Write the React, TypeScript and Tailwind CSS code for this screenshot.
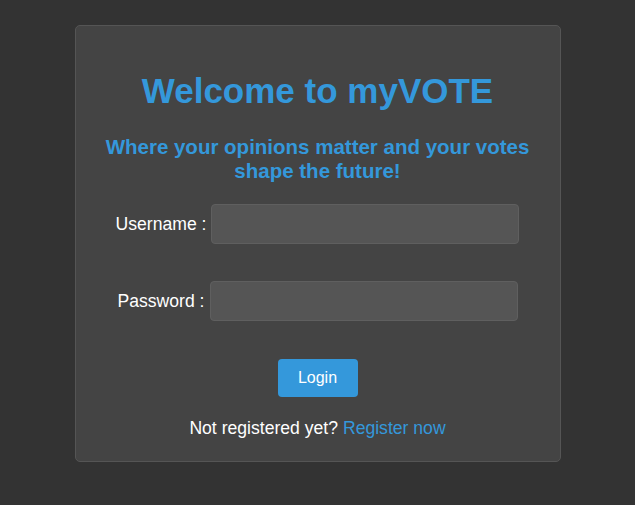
import React from "react";

const App: React.FC = () => {
  return (
    <div className="min-h-screen bg-[#333333] pt-[25px] font-['Liberation_Sans',Arial,sans-serif]">
      {/* login card */}
      <div className="mx-auto flex h-[437px] w-[486px] flex-col items-center rounded-[5px] border border-[#555555] bg-[#444444]">
        <h1 className="mt-[45px] text-[35px] font-bold leading-[40px] text-[#3498db]">
          Welcome to myVOTE
        </h1>
        <h2 className="mt-[24px] w-[440px] text-center text-[20.5px] font-bold leading-[24px] text-[#3498db]">
          Where your opinions matter and your votes shape the future!
        </h2>

        {/* username */}
        <div className="mt-[21px] flex items-center gap-[5px]">
          <label className="text-[17.6px] text-white">Username :</label>
          <input
            type="text"
            className="h-[40px] w-[308px] rounded-[4px] border border-[#5f5f5f] bg-[#555555] px-2 text-white outline-none"
          />
        </div>

        {/* password */}
        <div className="mt-[37px] flex items-center gap-[5px]">
          <label className="text-[17.6px] text-white">Password :</label>
          <input
            type="password"
            className="h-[40px] w-[308px] rounded-[4px] border border-[#5f5f5f] bg-[#555555] px-2 text-white outline-none"
          />
        </div>

        <button className="mt-[38px] h-[38px] w-[80px] rounded-[4px] bg-[#3498db] text-[16px] text-white">
          Login
        </button>

        <p className="mt-[21px] text-[17.6px] leading-[20px] text-white">
          Not registered yet? <a className="text-[#3498db]">Register now</a>
        </p>
      </div>
    </div>
  );
};

export default App;
